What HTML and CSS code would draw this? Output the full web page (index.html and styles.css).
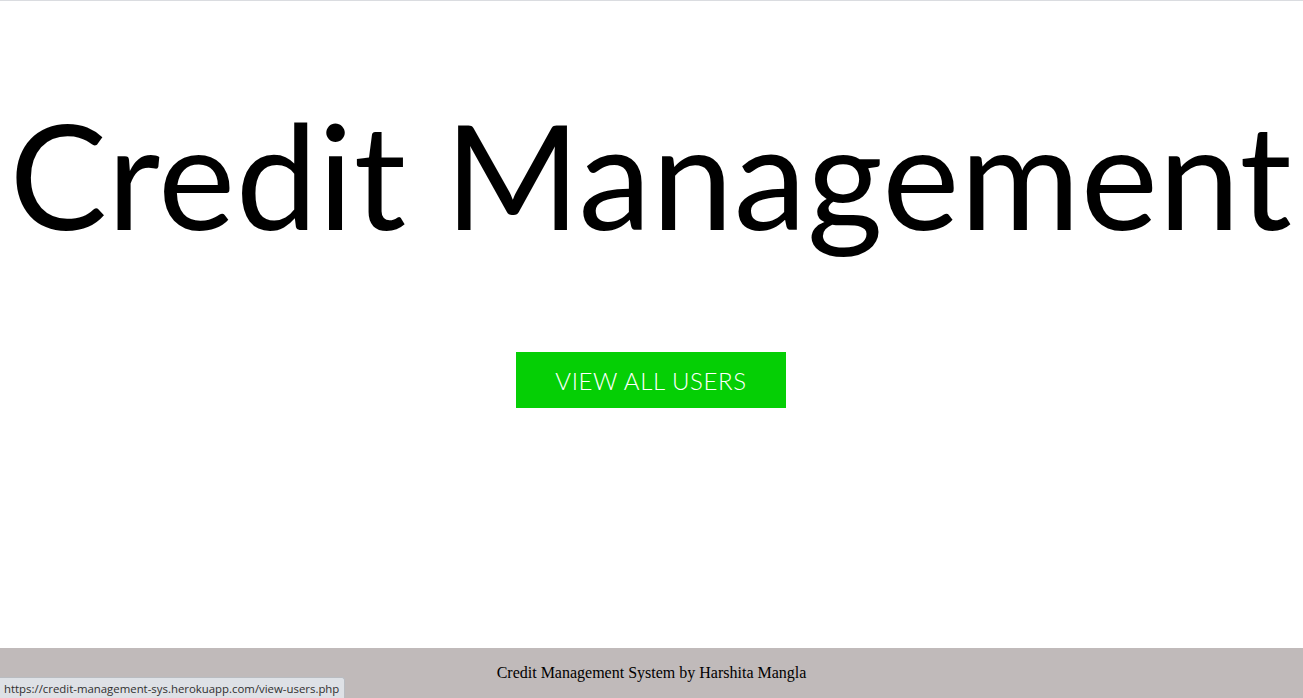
FILE: index.html
```html
<!DOCTYPE html>
<html>
<head>
<meta charset="utf-8">
<title>Credit Management</title>
<link rel="stylesheet" href="styles.css">
</head>
<body>
<div class="page">
  <main class="hero">
    <h1 class="title">Credit Management</h1>
    <a class="btn" href="view-users.php">VIEW ALL USERS</a>
  </main>
  <footer class="footer">Credit Management System by Harshita Mangla</footer>
</div>
<div class="status">https://credit-management-sys.herokuapp.com/view-users.php</div>
</body>
</html>
```
FILE: styles.css
```css
html, body {
  margin: 0;
  padding: 0;
  height: 100%;
}
body {
  background: #fff;
  border-top: 1px solid #dadce0;
  box-sizing: border-box;
  font-family: "Lato", "Open Sans", sans-serif;
  overflow: hidden;
}
.page {
  display: flex;
  flex-direction: column;
  height: 697px;
}
.hero {
  flex: 1;
  display: flex;
  flex-direction: column;
  align-items: center;
  padding-right: 1px;
}
.title {
  margin: 88px 0 0 0;
  font-family: "Lato", sans-serif;
  font-weight: 400;
  font-size: 146px;
  line-height: 170px;
  letter-spacing: 0.6px;
  color: #000;
  white-space: nowrap;
}
.btn {
  margin-top: 93px;
  width: 270px;
  height: 56px;
  display: flex;
  align-items: center;
  justify-content: center;
  background: #05cf05;
  color: #fff;
  font-size: 24px;
  font-weight: 300;
  text-decoration: none;
  letter-spacing: 0.6px;
}
.footer {
  height: 50px;
  background: #c0baba;
  display: flex;
  align-items: center;
  justify-content: center;
  font-family: "Liberation Serif", serif;
  font-size: 16px;
  color: #000;
}
.status {
  position: absolute;
  left: 0;
  bottom: 0;
  height: 20px;
  padding: 0 5px 0 4px;
  display: flex;
  align-items: center;
  background: #dee1e6;
  border: 1px solid #b9bcc1;
  border-left: none;
  border-bottom: none;
  border-top-right-radius: 3px;
  font-family: "Open Sans", "Noto Sans", sans-serif;
  font-size: 11.4px;
  color: #303030;
}
```
